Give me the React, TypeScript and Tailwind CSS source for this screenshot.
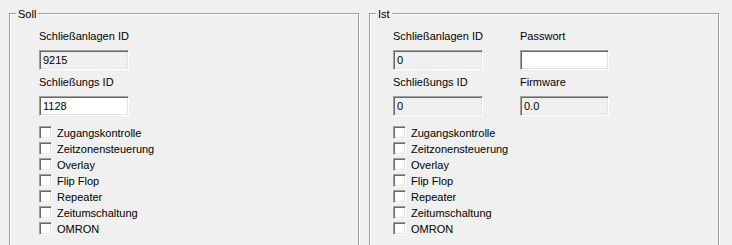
import React from "react";

const font = { fontFamily: '"Liberation Sans", Arial, sans-serif' };

function Field({ value, enabled, w = "w-[90px]" }: { value: string; enabled?: boolean; w?: string }) {
  return (
    <div
      className={`${w} h-[20px] border border-t-[#a0a0a0] border-l-[#a0a0a0] border-r-white border-b-white shadow-[inset_1px_1px_0_#696969,inset_-1px_-1px_0_#e3e3e3] ${
        enabled ? "bg-white" : "bg-[#f0f0f0]"
      } flex items-center pl-[3px] text-[11px] leading-[13px] text-black`}
    >
      {value}
    </div>
  );
}

function Label({ text }: { text: string }) {
  return <div className="text-[11px] leading-[13px] text-black">{text}</div>;
}

function Check({ label }: { label: string }) {
  return (
    <div className="h-[16px] flex items-start gap-[5px]">
      <div className="mt-[1px] w-[13px] h-[13px] border border-t-[#a0a0a0] border-l-[#a0a0a0] border-r-white border-b-white shadow-[inset_1px_1px_0_#696969,inset_-1px_-1px_0_#e3e3e3] bg-white" />
      <div className="text-[11px] leading-[16px] text-black">{label}</div>
    </div>
  );
}

const checks = [
  "Zugangskontrolle",
  "Zeitzonensteuerung",
  "Overlay",
  "Flip Flop",
  "Repeater",
  "Zeitumschaltung",
  "OMRON",
];

function Group({ title, children, pl }: { title: string; children: React.ReactNode; pl: string }) {
  return (
    <div className="relative w-[350px] h-[240px] border border-[#a0a0a0] shadow-[1px_1px_0_white,inset_1px_1px_0_white]">
      <div className="absolute left-[6px] top-[-6px] px-[2px] bg-[#f0f0f0] text-[11px] leading-[13px] text-black">
        {title}
      </div>
      <div className={`${pl} pt-[16px]`}>{children}</div>
    </div>
  );
}

export default function App() {
  return (
    <div style={font} className="w-[732px] h-[245px] overflow-hidden bg-[#f0f0f0] pl-[9px] pt-[13px] flex gap-[10px]">
      <Group title="Soll" pl="pl-[29px]">
        <Label text="Schließanlagen ID" />
        <div className="mt-[7px]">
          <Field value="9215" />
        </div>
        <div className="mt-[6px]">
          <Label text="Schließungs ID" />
        </div>
        <div className="mt-[7px]">
          <Field value="1128" enabled />
        </div>
        <div className="mt-[9px] flex flex-col">
          {checks.map((c) => (
            <Check key={c} label={c} />
          ))}
        </div>
      </Group>
      <Group title="Ist" pl="pl-[23px]">
        <div className="flex gap-[37px]">
          <div>
            <Label text="Schließanlagen ID" />
            <div className="mt-[7px]">
              <Field value="0" />
            </div>
            <div className="mt-[6px]">
              <Label text="Schließungs ID" />
            </div>
            <div className="mt-[7px]">
              <Field value="0" />
            </div>
          </div>
          <div>
            <Label text="Passwort" />
            <div className="mt-[7px]">
              <Field value="" enabled w="w-[89px]" />
            </div>
            <div className="mt-[6px]">
              <Label text="Firmware" />
            </div>
            <div className="mt-[7px]">
              <Field value="0.0" w="w-[89px]" />
            </div>
          </div>
        </div>
        <div className="mt-[9px] flex flex-col">
          {checks.map((c) => (
            <Check key={c} label={c} />
          ))}
        </div>
      </Group>
    </div>
  );
}
